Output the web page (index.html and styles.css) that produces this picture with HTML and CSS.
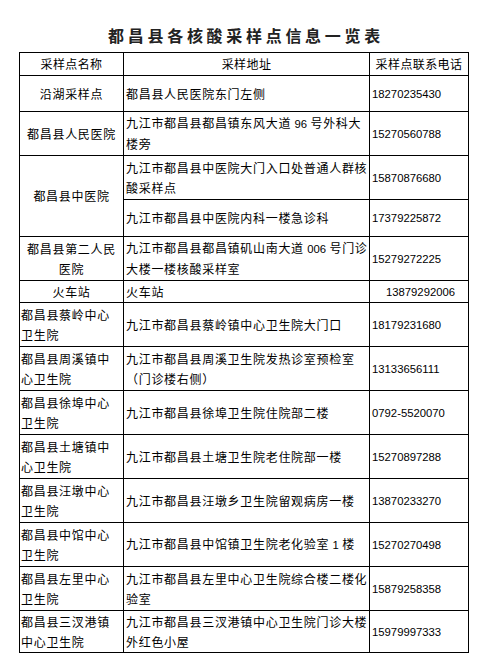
FILE: index.html
```html
<!DOCTYPE html>
<html lang="zh-CN">
<head>
<meta charset="utf-8">
<title>都昌县各核酸采样点信息一览表</title>
<link rel="stylesheet" href="styles.css">
</head>
<body>
<div class="page">
  <h1 class="title">都昌县各核酸采样点信息一览表</h1>
  <table class="sites">
    <colgroup>
      <col class="c-name">
      <col class="c-addr">
      <col class="c-tel">
    </colgroup>
    <thead>
      <tr class="r-head">
        <th>采样点名称</th>
        <th>采样地址</th>
        <th>采样点联系电话</th>
      </tr>
    </thead>
    <tbody>
      <tr class="r-36">
        <td class="name center">沿湖采样点</td>
        <td class="addr">都昌县人民医院东门左侧</td>
        <td class="tel">18270235430</td>
      </tr>
      <tr class="r-44">
        <td class="name center">都昌县人民医院</td>
        <td class="addr">九江市都昌县都昌镇东风大道 <span class="num">96</span> 号外科大<br>楼旁</td>
        <td class="tel">15270560788</td>
      </tr>
      <tr class="r-44">
        <td class="name center" rowspan="2">都昌县中医院</td>
        <td class="addr">九江市都昌县中医院大门入口处普通人群核<br>酸采样点</td>
        <td class="tel">15870876680</td>
      </tr>
      <tr class="r-37">
        <td class="addr">九江市都昌县中医院内科一楼急诊科</td>
        <td class="tel">17379225872</td>
      </tr>
      <tr class="r-44">
        <td class="name center">都昌县第二人民<br>医院</td>
        <td class="addr">九江市都昌县都昌镇矶山南大道 <span class="num">006</span> 号门诊<br>大楼一楼核酸采样室</td>
        <td class="tel">15279272225</td>
      </tr>
      <tr class="r-22">
        <td class="name center">火车站</td>
        <td class="addr">火车站</td>
        <td class="tel center">13879292006</td>
      </tr>
      <tr class="r-44">
        <td class="name">都昌县蔡岭中心<br>卫生院</td>
        <td class="addr">九江市都昌县蔡岭镇中心卫生院大门口</td>
        <td class="tel">18179231680</td>
      </tr>
      <tr class="r-44">
        <td class="name">都昌县周溪镇中<br>心卫生院</td>
        <td class="addr">九江市都昌县周溪卫生院发热诊室预检室<br>（门诊楼右侧）</td>
        <td class="tel">13133656111</td>
      </tr>
      <tr class="r-44">
        <td class="name">都昌县徐埠中心<br>卫生院</td>
        <td class="addr">九江市都昌县徐埠卫生院住院部二楼</td>
        <td class="tel">0792-5520070</td>
      </tr>
      <tr class="r-44">
        <td class="name">都昌县土塘镇中<br>心卫生院</td>
        <td class="addr">九江市都昌县土塘卫生院老住院部一楼</td>
        <td class="tel">15270897288</td>
      </tr>
      <tr class="r-44">
        <td class="name">都昌县汪墩中心<br>卫生院</td>
        <td class="addr">九江市都昌县汪墩乡卫生院留观病房一楼</td>
        <td class="tel">13870233270</td>
      </tr>
      <tr class="r-44">
        <td class="name">都昌县中馆中心<br>卫生院</td>
        <td class="addr">九江市都昌县中馆镇卫生院老化验室 <span class="num">1</span> 楼</td>
        <td class="tel">15270270498</td>
      </tr>
      <tr class="r-44">
        <td class="name">都昌县左里中心<br>卫生院</td>
        <td class="addr">九江市都昌县左里中心卫生院综合楼二楼化<br>验室</td>
        <td class="tel">15879258358</td>
      </tr>
      <tr class="r-42">
        <td class="name">都昌县三汊港镇<br>中心卫生院</td>
        <td class="addr">九江市都昌县三汊港镇中心卫生院门诊大楼<br>外红色小屋</td>
        <td class="tel">15979997333</td>
      </tr>
    </tbody>
  </table>
</div>
</body>
</html>
```
FILE: styles.css
```css
html, body {
  margin: 0;
  padding: 0;
  background: #ffffff;
}

.page {
  width: 450px;
  margin-left: 19px;
  padding-top: 23px;
}

.title {
  margin: 0 0 5px 0;
  height: 24px;
  line-height: 24px;
  text-align: center;
  font-family: "Noto Sans CJK SC", "Noto Sans", sans-serif;
  font-size: 16px;
  font-weight: 700;
  letter-spacing: 3.7px;
  color: #222222;
  padding-left: 4px;
}

.sites {
  width: 450px;
  table-layout: fixed;
  border-collapse: collapse;
  font-family: "Noto Sans CJK SC", "Noto Sans", sans-serif;
  font-size: 12px;
  letter-spacing: 0.7px;
  color: #000000;
}

.c-name { width: 104px; }
.c-addr { width: 246px; }
.c-tel { width: 99px; }

.sites th,
.sites td {
  border: 1px solid #000000;
  padding: 0 1px 0 1px;
  line-height: 20px;
  vertical-align: middle;
  text-align: left;
  white-space: nowrap;
  overflow: hidden;
}

.sites th {
  font-weight: 400;
  text-align: center;
  letter-spacing: 0.4px;
}

.sites td.center {
  text-align: center;
}

.sites td.name {
  padding-left: 1px;
}

.sites td.addr {
  padding-left: 2px;
}

.sites td.tel {
  font-family: "Liberation Sans", Arial, sans-serif;
  font-size: 11.3px;
  letter-spacing: 0;
  padding-left: 2px;
}

.sites td.tel.center {
  text-align: center;
  padding-left: 4px;
}

.num {
  font-family: "Liberation Sans", Arial, sans-serif;
  font-size: 11.3px;
  letter-spacing: 0;
}

.r-head { height: 23px; }
.r-36 { height: 36px; }
.r-44 { height: 44px; }
.r-37 { height: 37px; }
.r-22 { height: 22px; }
.r-42 { height: 42px; }
```
